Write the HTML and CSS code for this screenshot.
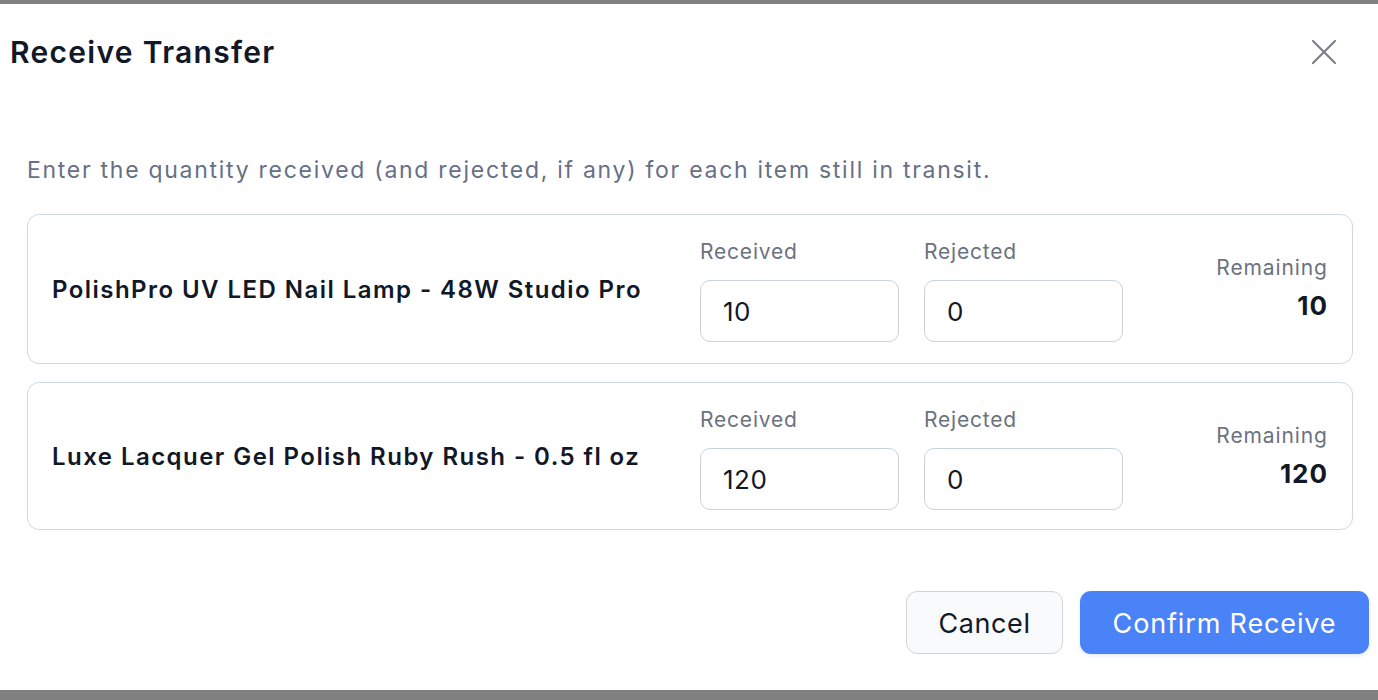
FILE: index.html
```html
<!DOCTYPE html>
<html lang="en">
<head>
<meta charset="utf-8">
<title>Receive Transfer</title>
<link rel="stylesheet" href="styles.css">
</head>
<body>
<div class="dialog">
  <div class="header">
    <h1 class="title">Receive Transfer</h1>
    <button class="close" aria-label="Close">
      <svg width="28" height="28" viewBox="0 0 28 28" fill="none" stroke="#7b7f87" stroke-width="2.2" stroke-linecap="round"><path d="M3 3 L25 25 M25 3 L3 25"/></svg>
    </button>
  </div>
  <p class="desc">Enter the quantity received (and rejected, if any) for each item still in transit.</p>
  <div class="items">
    <div class="card">
      <div class="name">PolishPro UV LED Nail Lamp - 48W Studio Pro</div>
      <div class="field">
        <label class="label">Received</label>
        <div class="input">10</div>
      </div>
      <div class="field">
        <label class="label">Rejected</label>
        <div class="input">0</div>
      </div>
      <div class="remain">
        <div class="rlabel">Remaining</div>
        <div class="rval">10</div>
      </div>
    </div>
    <div class="card card2">
      <div class="name">Luxe Lacquer Gel Polish Ruby Rush - 0.5 fl oz</div>
      <div class="field">
        <label class="label">Received</label>
        <div class="input">120</div>
      </div>
      <div class="field">
        <label class="label">Rejected</label>
        <div class="input">0</div>
      </div>
      <div class="remain">
        <div class="rlabel">Remaining</div>
        <div class="rval">120</div>
      </div>
    </div>
  </div>
  <div class="footer">
    <button class="btn cancel">Cancel</button>
    <button class="btn confirm">Confirm Receive</button>
  </div>
</div>
</body>
</html>
```
FILE: styles.css
```css
* { box-sizing: border-box; }
html, body { margin: 0; padding: 0; }
body {
  background: #808080;
  font-family: Inter, "Noto Sans", sans-serif;
  height: 700px;
  overflow: hidden;
}
.dialog {
  margin-top: 4px;
  height: 686px;
  background: #ffffff;
  display: flex;
  flex-direction: column;
}
.header {
  display: flex;
  align-items: center;
  justify-content: space-between;
  padding: 30px 40px 0 10px;
}
.title {
  margin: 0;
  font-size: 30px;
  line-height: 36px;
  font-weight: 600;
  letter-spacing: 1.3px;
  color: #111827;
}
.close {
  border: 0;
  background: none;
  padding: 0;
  width: 28px;
  height: 28px;
  display: flex;
}
.desc {
  margin: 85px 0 0 27px;
  font-size: 23px;
  line-height: 30px;
  letter-spacing: 1.72px;
  color: #667085;
}
.items {
  margin-top: 29px;
  padding: 0 25px 0 27px;
  display: flex;
  flex-direction: column;
  gap: 18px;
}
.card {
  border: 1.5px solid #d1d7de;
  border-radius: 12px;
  height: 150px;
  padding: 22px 25px 0 24px;
  display: grid;
  grid-template-columns: 1fr 199px 199px 179px;
  column-gap: 25px;
  align-items: start;
}
.card2 { height: 148px; }
.name {
  align-self: center;
  margin-top: -22px;
  font-size: 24px;
  font-weight: 600;
  letter-spacing: 1.45px;
  color: #111827;
}
.field {
  display: flex;
  flex-direction: column;
}
.label {
  font-size: 21px;
  line-height: 28px;
  letter-spacing: 0.8px;
  color: #6b7280;
  margin-top: 1px;
  margin-bottom: 14px;
}
.input {
  height: 62px;
  border: 1.5px solid #cad2db;
  border-radius: 10px;
  padding-left: 22px;
  font-size: 26px;
  line-height: 61px;
  letter-spacing: 0.5px;
  color: #111827;
}
.remain {
  text-align: right;
  padding-top: 17px;
}
.rlabel {
  font-size: 21px;
  line-height: 28px;
  letter-spacing: 0.9px;
  margin-right: -0.9px;
  color: #6b7280;
}
.rval {
  margin-top: 10px;
  font-size: 26px;
  line-height: 28px;
  font-weight: 700;
  letter-spacing: 1px;
  margin-right: -1px;
  color: #111827;
}
.footer {
  margin-top: 61px;
  display: flex;
  justify-content: flex-end;
  gap: 17px;
  padding-right: 9px;
}
.btn {
  font-family: Inter, "Noto Sans", sans-serif;
  font-size: 27px;
  height: 63px;
  border-radius: 11px;
  cursor: pointer;
  padding-top: 2px;
}
.cancel {
  width: 157px;
  background: #f8fafc;
  border: 1.5px solid #cfd5dc;
  color: #111827;
  letter-spacing: 0.6px;
}
.confirm {
  width: 289px;
  background: #4a82f7;
  border: 0;
  color: #ffffff;
  letter-spacing: 0.85px;
  box-shadow: 0 2px 4px rgba(74,130,247,0.15);
}
```
